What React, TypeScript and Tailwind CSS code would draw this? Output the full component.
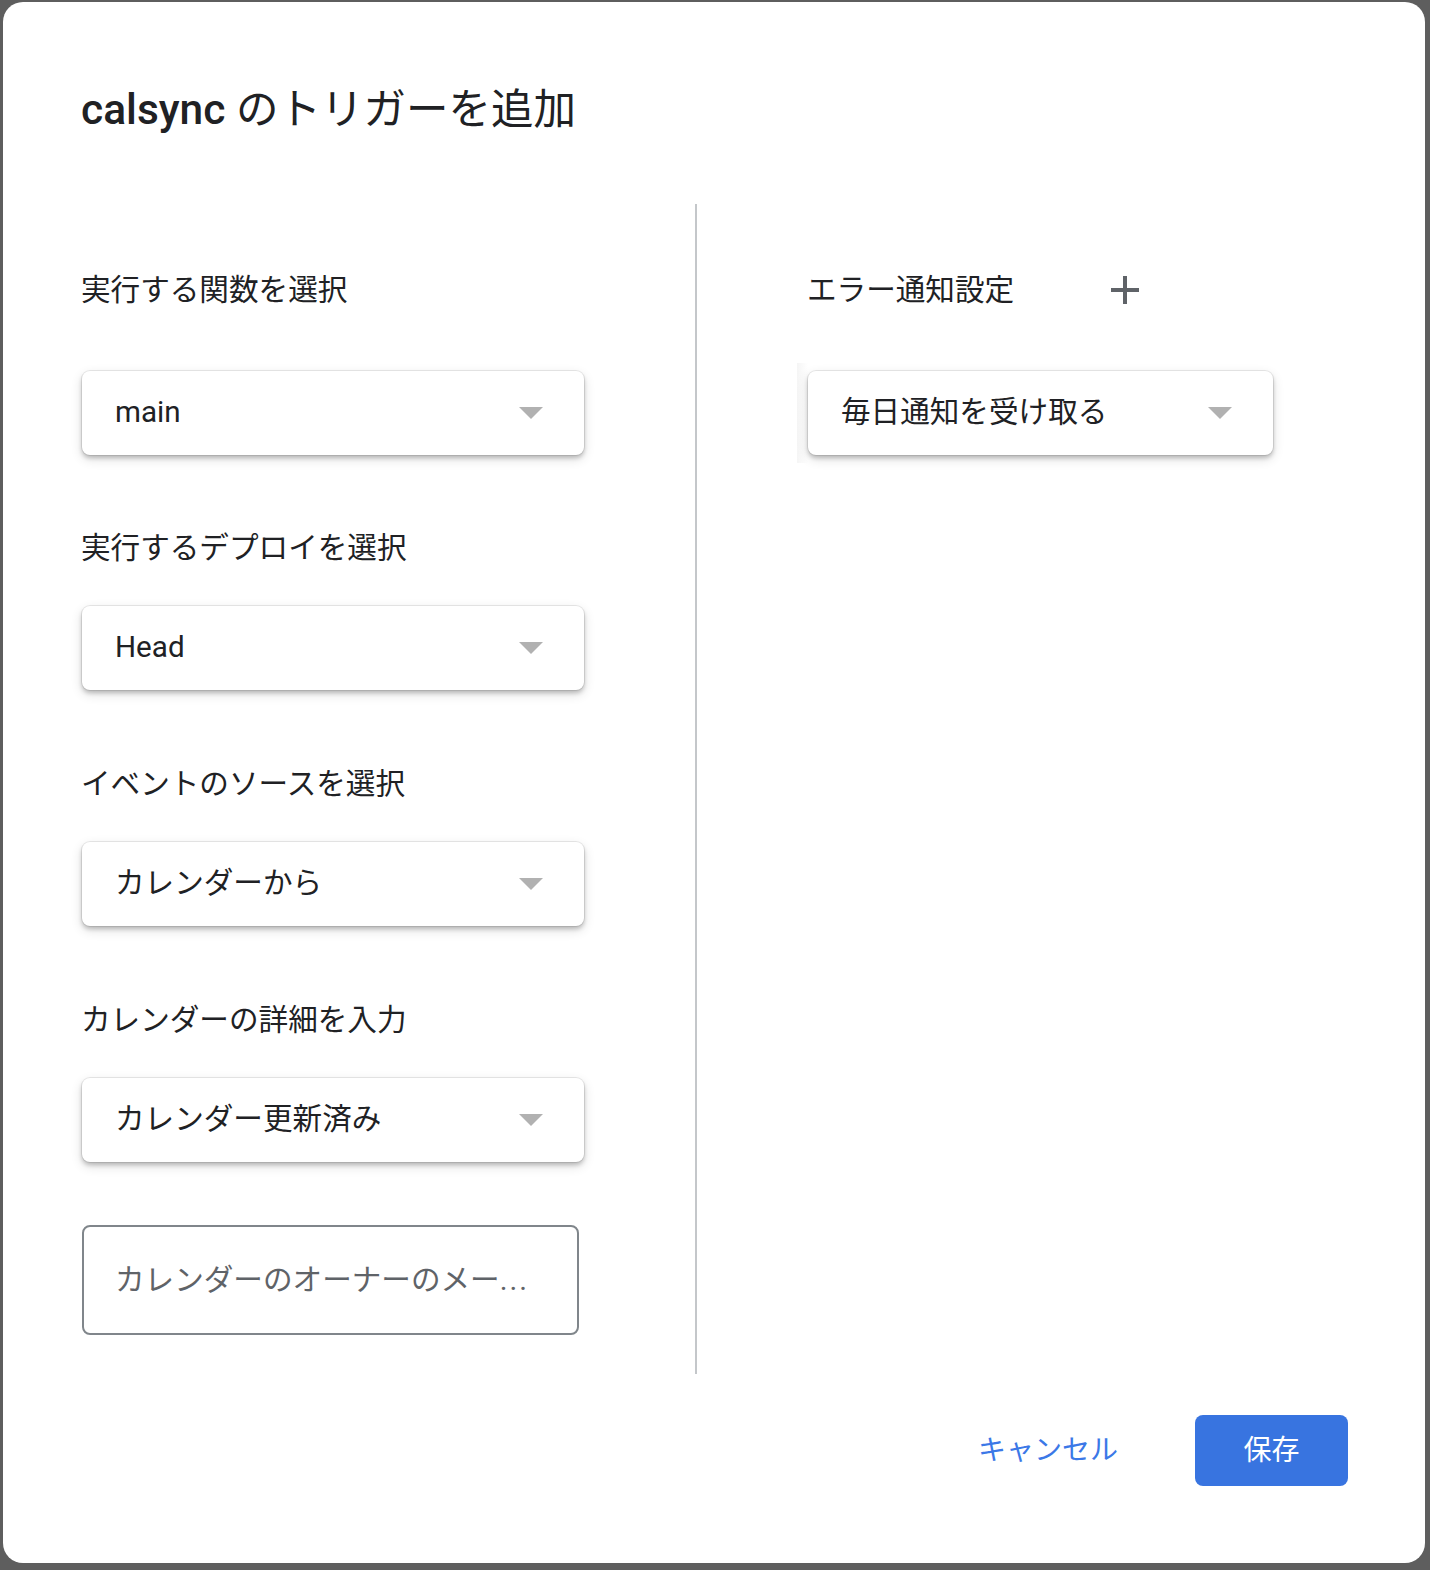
import React from "react";

const FONT = { fontFamily: 'Roboto, "Noto Sans CJK JP", sans-serif' };

function Caret() {
  return (
    <svg viewBox="0 0 24 12" className="h-[12px] w-[24px] shrink-0">
      <path d="M0 0h24L12 12Z" fill="#b1b1b1" />
    </svg>
  );
}

function Select({ value, className = "w-[502px]" }: { value: string; className?: string }) {
  return (
    <div
      className={`flex h-[84px] items-center justify-between rounded-[8px] bg-white pl-[33px] pr-[41px] shadow-[0_0_0_1px_rgba(0,0,0,0.08),0_3px_4px_rgba(0,0,0,0.2),0_4px_12px_rgba(0,0,0,0.14)] ${className}`}
    >
      <span className="text-[29.6px] leading-none text-[#202124]">{value}</span>
      <Caret />
    </div>
  );
}

function Label({ children }: { children: React.ReactNode }) {
  return <div className="h-[40px] text-[29.6px] leading-[40px] text-[#202124]">{children}</div>;
}

export default function App() {
  return (
    <div className="h-[1570px] w-[1430px] bg-[#5e5e5e] pl-[3px] pr-[5px] pt-[2px]" style={FONT}>
      <div className="flex h-[1561px] flex-col rounded-[20px] bg-white pl-[78px] pr-[77px]">
        <h1 className="pt-[84px] text-[42.5px] leading-[48px] text-[#202124]">
          <span className="font-medium">calsync</span> のトリガーを追加
        </h1>

        <div className="mt-[70px] flex h-[1170px]">
          {/* 左カラム */}
          <div className="flex w-[614px] flex-col pt-[66px]">
            <Label>実行する関数を選択</Label>
            <div className="mt-[61px] pl-px">
              <Select value="main" />
            </div>

            <div className="mt-[73px]">
              <Label>実行するデプロイを選択</Label>
            </div>
            <div className="mt-[38px] pl-px">
              <Select value="Head" />
            </div>

            <div className="mt-[74px]">
              <Label>イベントのソースを選択</Label>
            </div>
            <div className="mt-[38px] pl-px">
              <Select value="カレンダーから" />
            </div>

            <div className="mt-[74px]">
              <Label>カレンダーの詳細を入力</Label>
            </div>
            <div className="mt-[38px] pl-px">
              <Select value="カレンダー更新済み" />
            </div>

            <div className="ml-px mt-[63px] flex h-[110px] w-[497px] items-center rounded-[8px] border-2 border-[#80868b] pl-[31px] pr-[20px]">
              <span className="whitespace-nowrap text-[29.6px] text-[#5f6368]">
                カレンダーのオーナーのメー<span className="tracking-[2px]">...</span>
              </span>
            </div>
          </div>

          <div className="w-[2px] bg-[#c4c7ca]" />

          {/* 右カラム */}
          <div className="flex flex-col pl-[110px] pt-[66px]">
            <div className="flex items-center">
              <Label>エラー通知設定</Label>
              <svg viewBox="0 0 28 28" className="ml-[97px] h-[28px] w-[28px]">
                <path d="M14 0v28M0 14h28" stroke="#5f6368" strokeWidth="4" />
              </svg>
            </div>
            <div className="-ml-[10px] mt-[61px] flex">
              <div className="-my-[8px] w-[11px] bg-gradient-to-r from-[#f5f5f5] to-white" />
              <Select value="毎日通知を受け取る" className="w-[465px]" />
            </div>
          </div>
        </div>

        <div className="mt-[41px] flex items-center justify-end">
          <button type="button" className="text-[28px] leading-none text-[#3b78e7]">
            キャンセル
          </button>
          <button
            type="button"
            className="ml-[77px] flex h-[71px] w-[153px] items-center justify-center rounded-[8px] bg-[#3874e0] text-[28px] leading-none text-white"
          >
            保存
          </button>
        </div>
      </div>
    </div>
  );
}
